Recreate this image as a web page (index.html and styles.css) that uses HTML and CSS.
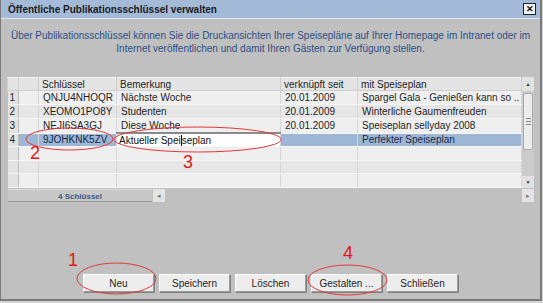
FILE: index.html
```html
<!DOCTYPE html>
<html lang="de">
<head>
<meta charset="UTF-8">
<title>Öffentliche Publikationsschlüssel verwalten</title>
<link rel="stylesheet" href="styles.css">
</head>
<body>

<div class="window">
  <div class="titlebar">
    <span class="title">Öffentliche Publikationsschlüssel verwalten</span>
    <span class="close">✕</span>
  </div>

  <div class="content">
    <p class="intro">Über Publikationsschlüssel können Sie die Druckansichten Ihrer Speisepläne auf Ihrer Homepage im Intranet oder im<br>Internet veröffentlichen und damit Ihren Gästen zur Verfügung stellen.</p>

    <div class="grid-area">
      <div class="grid-wrap">
        <table class="grid">
          <colgroup>
            <col class="c-num"><col class="c-blank"><col class="c-key"><col class="c-note"><col class="c-date"><col class="c-plan">
          </colgroup>
          <thead>
            <tr><th></th><th></th><th>Schlüssel</th><th>Bemerkung</th><th>verknüpft seit</th><th>mit Speiseplan</th></tr>
          </thead>
          <tbody>
            <tr class="r1"><td class="num">1</td><td></td><td>QNJU4NHOQR</td><td>Nächste Woche</td><td>20.01.2009</td><td>Spargel Gala - Genießen kann so ..</td></tr>
            <tr class="r2"><td class="num">2</td><td></td><td>XEOMO1PO8Y</td><td>Studenten</td><td>20.01.2009</td><td>Winterliche Gaumenfreuden</td></tr>
            <tr class="r3"><td class="num">3</td><td></td><td>NEJI6SA3GJ</td><td>Diese Woche</td><td>20.01.2009</td><td>Speiseplan sellyday 2008</td></tr>
            <tr class="r4 selected"><td class="num">4</td><td></td><td>9JOHKNK5ZV</td><td class="editing">Aktueller Spei<span class="caret"></span>seplan</td><td></td><td>Perfekter Speiseplan</td></tr>
            <tr class="r5"><td class="num"></td><td></td><td></td><td></td><td></td><td></td></tr>
            <tr class="r6"><td class="num"></td><td></td><td></td><td></td><td></td><td></td></tr>
            <tr class="r7"><td class="num"></td><td></td><td></td><td></td><td></td><td></td></tr>
          </tbody>
        </table>
        <div class="vscroll">
          <div class="sb-btn">▲</div>
          <div class="sb-track">
            <div class="sb-thumb"><span class="grip"></span></div>
          </div>
          <div class="sb-btn down">▼</div>
        </div>
      </div>
      <div class="hscroll">
        <div class="count">4 Schlüssel</div>
        <div class="h-btn">◂</div>
        <div class="h-gap"></div>
        <div class="h-btn">▸</div>
      </div>
    </div>

    <div class="buttons">
      <button>Neu</button>
      <button>Speichern</button>
      <button>Löschen</button>
      <button>Gestalten ...</button>
      <button>Schließen</button>
    </div>
  </div>

  <!-- Anmerkungen (rot) -->
  <svg class="marks" width="543" height="303" viewBox="0 0 543 303">
    <ellipse cx="68.5" cy="139" rx="43.5" ry="11"/>
    <ellipse cx="196.5" cy="139.5" rx="83.5" ry="12.5"/>
    <ellipse cx="115.5" cy="278.5" rx="39.5" ry="15.5"/>
    <ellipse cx="346.5" cy="280" rx="39.5" ry="15"/>
    <text x="67" y="266">1</text>
    <text x="29" y="159">2</text>
    <text x="182" y="168">3</text>
    <text x="342" y="259">4</text>
  </svg>
</div>

</body>
</html>
```

FILE: styles.css
```css
body {
  margin: 0;
  padding: 0;
  background: #d4d4d4;
  font-family: 'Liberation Sans', Arial, sans-serif;
  font-size: 10px;
  color: #1e1e1e;
}
.window {
  position: relative;
  width: 539px;
  height: 299px;
  background: #c0c0c0;
  border: 1px solid #7a7a7a;
  border-top: none;
  border-right-width: 2px;
  border-bottom-width: 2px;
}
.titlebar {
  display: flex;
  align-items: center;
  justify-content: space-between;
  height: 18px;
  padding: 0 4px 0 7px;
  background: #a3bbd9;
  border-bottom: 1px solid #dfe6ee;
}
.title {
  font-weight: bold;
  color: #1a1a1a;
}
.close {
  width: 11px;
  height: 10px;
  line-height: 10px;
  text-align: center;
  font-size: 9px;
  font-weight: bold;
  background: #f2f2f2;
  border: 1px solid #222;
  color: #111;
}
.content {
  padding: 0 6px;
}
.intro {
  margin: 10px 0 22px;
  line-height: 13px;
  text-align: center;
  color: #2c4f86;
}

/* Tabelle */
.grid-wrap {
  display: flex;
}
.grid {
  width: 514px;
  border-collapse: collapse;
  table-layout: fixed;
}
.c-num { width: 11px; }
.c-blank { width: 20px; }
.c-key { width: 78px; }
.c-note { width: 164px; }
.c-date { width: 77px; }
.c-plan { width: 164px; }
.grid th {
  height: 12px;
  padding: 0 3px;
  background: #e4e4e4;
  border: 1px solid #cfcfcf;
  border-top: 1px solid #f4f4f4;
  font-weight: normal;
  text-align: left;
  white-space: nowrap;
  overflow: hidden;
}
.grid td {
  height: 13px;
  padding: 0 3px 0 4px;
  border-right: 1px solid #d6d6d6;
  border-bottom: 1px solid #f6f6f6;
  white-space: nowrap;
  overflow: hidden;
}
.grid tr.r4 td, .grid tr.r6 td {
  height: 12px;
}
.grid tr.r1 td, .grid tr.r3 td, .grid tr.r5 td, .grid tr.r7 td {
  background: #efefef;
}
.grid tr.r2 td, .grid tr.r6 td {
  background: #e6e6e6;
}
.grid td.num {
  padding: 0 2px;
  background: #e2e2e2 !important;
  border-right: 1px solid #bdbdbd;
}
.grid tr.selected td {
  background: #9db6d6;
  color: #1a2a44;
}
.grid tr.selected td.editing {
  background: #ffffff;
  color: #111;
  border-top: 2px solid #8a8a8a;
  border-left: 1px solid #8a8a8a;
  padding-left: 2px;
}
.caret {
  display: inline-block;
  width: 1px;
  height: 11px;
  margin-bottom: -2px;
  background: #000;
}

/* Scrollbalken */
.vscroll {
  display: flex;
  flex-direction: column;
  width: 13px;
  background: #cbcbcb;
}
.sb-btn {
  height: 14px;
  line-height: 14px;
  text-align: center;
  font-size: 5px;
  color: #333;
  background: #e2e2e2;
}
.sb-btn.down {
  height: 12px;
  line-height: 12px;
}
.sb-track {
  flex: 1;
  padding: 2px 1px;
}
.sb-thumb {
  display: flex;
  align-items: center;
  justify-content: center;
  height: 55px;
  background: #ececec;
  border: 1px solid #a9a9a9;
  border-radius: 2px;
}
.grip {
  width: 5px;
  height: 5px;
  border-top: 1px solid #888;
  border-bottom: 1px solid #888;
  background: linear-gradient(#888, #888) center / 100% 1px no-repeat;
}
.hscroll {
  display: flex;
  height: 13px;
  margin-top: 1px;
  padding-left: 1px;
}
.count {
  width: 144px;
  line-height: 13px;
  text-align: center;
  font-size: 8px;
  font-weight: bold;
  color: #3c5a86;
  background: #c8c8c8;
  border-top: 1px solid #dadada;
  border-bottom: 1px solid #9a9a9a;
  box-sizing: border-box;
}
.h-btn {
  width: 12px;
  margin-left: 1px;
  line-height: 13px;
  text-align: center;
  font-size: 7px;
  color: #777;
  background: #e4e4e4;
}
.h-gap {
  flex: 1;
}

/* Knöpfe */
.buttons {
  display: flex;
  justify-content: center;
  gap: 5px;
  margin-top: 72px;
}
.buttons button {
  width: 71px;
  height: 18px;
  padding: 0;
  font-family: 'Liberation Sans', Arial, sans-serif;
  font-size: 10px;
  color: #1e1e1e;
  background: #ededed;
  border: 1px solid #9c9c9c;
  border-top-color: #ffffff;
  border-left-color: #ffffff;
  box-shadow: 1px 1px 0 #808080;
}

/* rote Markierungen */
.marks {
  position: absolute;
  left: 0;
  top: 0;
  pointer-events: none;
}
.marks ellipse {
  fill: none;
  stroke: #e0393b;
  stroke-width: 1;
}
.marks text {
  font-family: 'Liberation Sans', Arial, sans-serif;
  font-size: 18px;
  fill: #e01818;
}
```
